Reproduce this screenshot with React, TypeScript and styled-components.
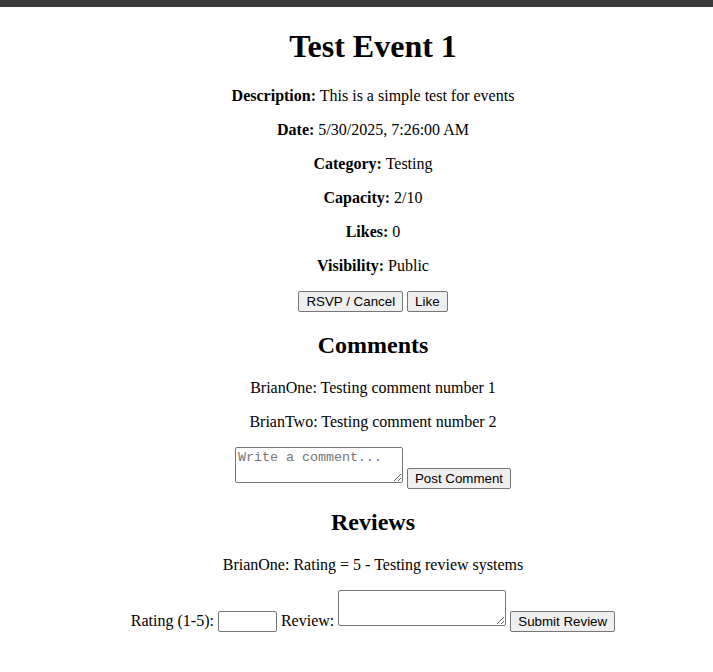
import React from "react";
import styled, { createGlobalStyle } from "styled-components";

const Global = createGlobalStyle`
  html, body { margin: 0; padding: 0; background: #ffffff; }
  body {
    font-family: "Liberation Serif", "Times New Roman", serif;
    font-size: 16px;
    color: #000;
  }
`;

const TopBar = styled.div`
  height: 7px;
  background: #3a3a3a;
`;

const Page = styled.main`
  text-align: center;
  padding: 0 8px 0 41px;
`;

const Title = styled.h1`
  font-size: 32px;
  font-weight: bold;
  margin: 21.44px 0;
`;

const SectionTitle = styled.h2`
  font-size: 24px;
  font-weight: bold;
  margin: 19.92px 0;
`;

const Field = styled.p`
  margin: 16px 0;
`;

const Row = styled.div``;

const Button = styled.button`
  font-family: "Liberation Sans", Arial, sans-serif;
  font-size: 13.333px;
  color: #000;
  background: #efefef;
  border: 1px solid #767676;
  border-radius: 2px;
  padding: 1px 7px;
  height: 21px;
  margin: 0;
  vertical-align: baseline;
  line-height: normal;
`;

const TextArea = styled.textarea`
  box-sizing: border-box;
  width: 168px;
  height: 36px;
  font-family: "Liberation Mono", "Courier New", monospace;
  font-size: 13.333px;
  padding: 2px;
  border: 1px solid #767676;
  border-radius: 2px;
  margin: 0;
  vertical-align: baseline;
  resize: both;
  &::placeholder { color: #757575; }
`;

const NumberInput = styled.input`
  box-sizing: border-box;
  width: 59px;
  height: 21px;
  padding: 1px 2px;
  border: 1px solid #767676;
  border-radius: 2px;
  margin: 0;
  font-family: "Liberation Sans", Arial, sans-serif;
  font-size: 13.333px;
`;

const fields: [string, string][] = [
  ["Description:", "This is a simple test for events"],
  ["Date:", "5/30/2025, 7:26:00 AM"],
  ["Category:", "Testing"],
  ["Capacity:", "2/10"],
  ["Likes:", "0"],
  ["Visibility:", "Public"],
];

export default function App() {
  return (
    <>
      <Global />
      <TopBar />
      <Page>
        <Title>Test Event 1</Title>
        {fields.map(([k, v]) => (
          <Field key={k}>
            <strong>{k}</strong> {v}
          </Field>
        ))}
        <Row>
          <Button>RSVP / Cancel</Button> <Button>Like</Button>
        </Row>
        <SectionTitle>Comments</SectionTitle>
        <Field>BrianOne: Testing comment number 1</Field>
        <Field>BrianTwo: Testing comment number 2</Field>
        <Row>
          <TextArea placeholder="Write a comment..." /> <Button>Post Comment</Button>
        </Row>
        <SectionTitle>Reviews</SectionTitle>
        <Field>BrianOne: Rating = 5 - Testing review systems</Field>
        <Row>
          Rating (1-5): <NumberInput type="text" /> Review: <TextArea />{" "}
          <Button>Submit Review</Button>
        </Row>
      </Page>
    </>
  );
}
